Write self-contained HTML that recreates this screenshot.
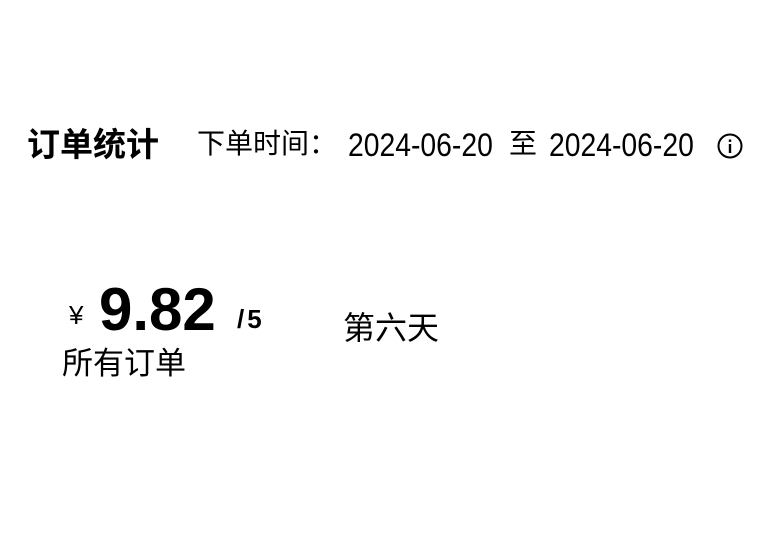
<!DOCTYPE html>
<html><head><meta charset="utf-8"><style>
html,body{margin:0;padding:0;background:#fff;width:762px;height:535px;overflow:hidden;position:relative;font-family:"Liberation Sans","Noto Sans CJK SC",sans-serif;color:#000}
div{position:absolute;white-space:nowrap;line-height:1}
.n{font-size:32px;transform:scaleX(0.885);transform-origin:0 0}
</style></head><body>
<div style="left:27px;top:128px;font-size:33px;font-weight:bold">订单统计</div>
<div style="left:197px;top:130px;font-size:28px">下单时间：</div>
<div class="n" style="left:348px;top:129px">2024-06-20</div>
<div style="left:509px;top:130px;font-size:28px">至</div>
<div class="n" style="left:549px;top:129px">2024-06-20</div>
<svg style="position:absolute;left:716px;top:132px" width="28" height="28" viewBox="0 0 28 28"><circle cx="14" cy="14" r="11.5" fill="none" stroke="#000" stroke-width="2"/><rect x="12.8" y="12" width="2.4" height="9" fill="#000"/><rect x="12.8" y="7.5" width="2.4" height="2.4" fill="#000"/></svg>
<div style="left:69px;top:302px;font-size:26px">¥</div>
<div style="left:99px;top:280px;font-size:60px;font-weight:bold">9.82</div>
<div style="left:237px;top:306px;font-size:26px;font-weight:bold;letter-spacing:3px">/5</div>
<div style="left:343px;top:312px;font-size:32px">第六天</div>
<div style="left:62px;top:348px;font-size:31px">所有订单</div>
</body></html>
